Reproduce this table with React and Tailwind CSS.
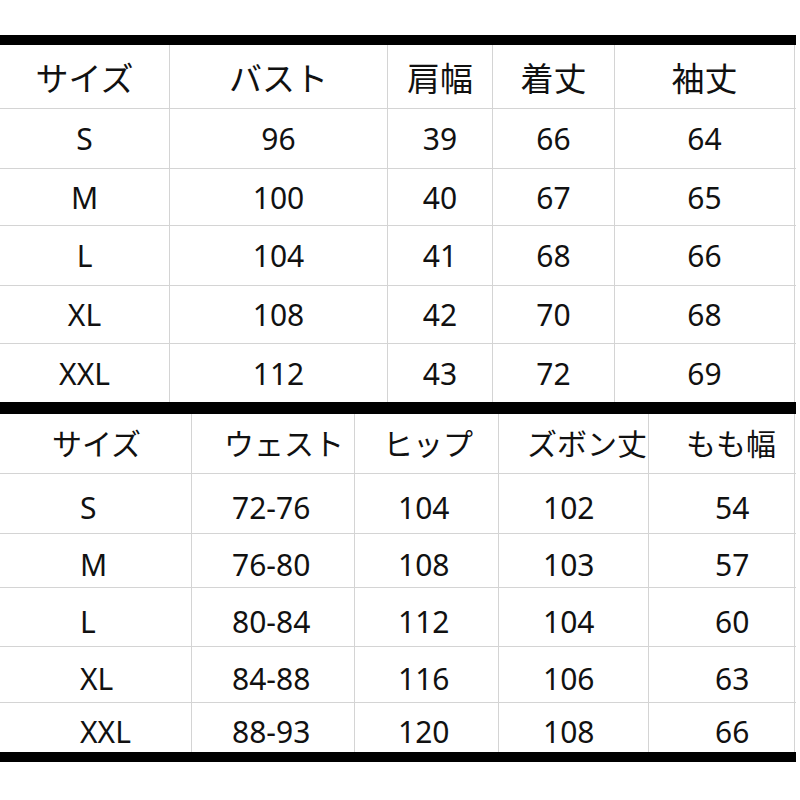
const top = {
  cols: ["w-[170px]", "w-[218px]", "w-[105px]", "w-[122px]", "w-[180px]"],
  head: ["サイズ", "バスト", "肩幅", "着丈", "袖丈"],
  heights: ["h-[60px]", "h-[57px]", "h-[60px]", "h-[58px]", "h-[58px]"],
  rows: [
    ["S", "96", "39", "66", "64"],
    ["M", "100", "40", "67", "65"],
    ["L", "104", "41", "68", "66"],
    ["XL", "108", "42", "70", "68"],
    ["XXL", "112", "43", "72", "69"],
  ],
};

// bottom table is roughly left-aligned in each column
const bottom = {
  cols: ["w-[192px]", "w-[163px]", "w-[144px]", "w-[150px]", "w-[146px]"],
  head: ["サイズ", "ウェスト", "ヒップ", "ズボン丈", "もも幅"],
  headPad: ["pl-[52px]", "pl-[32px]", "pl-[28px]", "pl-[28px]", "pl-[37px]"],
  cellPad: ["pl-[80px]", "pl-[40px]", "pl-[43px]", "pl-[44px]", "pl-[66px]"],
  heights: ["h-[60px]", "h-[54px]", "h-[59px]", "h-[56px]", "h-[49px]"],
  rows: [
    ["S", "72-76", "104", "102", "54"],
    ["M", "76-80", "108", "103", "57"],
    ["L", "80-84", "112", "104", "60"],
    ["XL", "84-88", "116", "106", "63"],
    ["XXL", "88-93", "120", "108", "66"],
  ],
};

const Cell = ({ w, children, className = "" }) => (
  <div
    className={`${w} h-full shrink-0 border-r border-[#d4d4d4] flex items-center whitespace-nowrap ${className}`}
  >
    {children}
  </div>
);

const App = () => {
  return (
    <div className="w-[800px] h-[800px] bg-white pt-[35px] text-[#111] font-['Noto_Sans','Noto_Sans_CJK_JP',sans-serif]">
      <div className="w-[796px]">
        {/* top table */}
        <div className="h-[10px] bg-black" />
        <div className="flex h-[64px] border-b border-[#d4d4d4] text-[33px]">
          {top.head.map((h, i) => (
            <Cell key={h} w={top.cols[i]} className="justify-center pt-1">
              {h}
            </Cell>
          ))}
        </div>
        {top.rows.map((r, ri) => (
          <div
            key={r[0]}
            className={`flex ${top.heights[ri]} ${ri < 4 ? "border-b border-[#d4d4d4]" : ""} text-[30px]`}
          >
            {r.map((v, i) => (
              <Cell key={i} w={top.cols[i]} className="justify-center">
                {v}
              </Cell>
            ))}
          </div>
        ))}

        {/* bottom table */}
        <div className="h-[12px] bg-black" />
        <div className="flex h-[60px] border-b border-[#d4d4d4] text-[30px]">
          {bottom.head.map((h, i) => (
            <Cell key={h} w={bottom.cols[i]} className={bottom.headPad[i]}>
              {h}
            </Cell>
          ))}
        </div>
        {bottom.rows.map((r, ri) => (
          <div
            key={r[0]}
            className={`flex ${bottom.heights[ri]} ${ri < 4 ? "border-b border-[#d4d4d4]" : ""} text-[30px]`}
          >
            {r.map((v, i) => (
              <Cell key={i} w={bottom.cols[i]} className={`pt-2 ${bottom.cellPad[i]}`}>
                {v}
              </Cell>
            ))}
          </div>
        ))}
        <div className="h-[10px] bg-black" />
      </div>
    </div>
  );
};

export default App;
